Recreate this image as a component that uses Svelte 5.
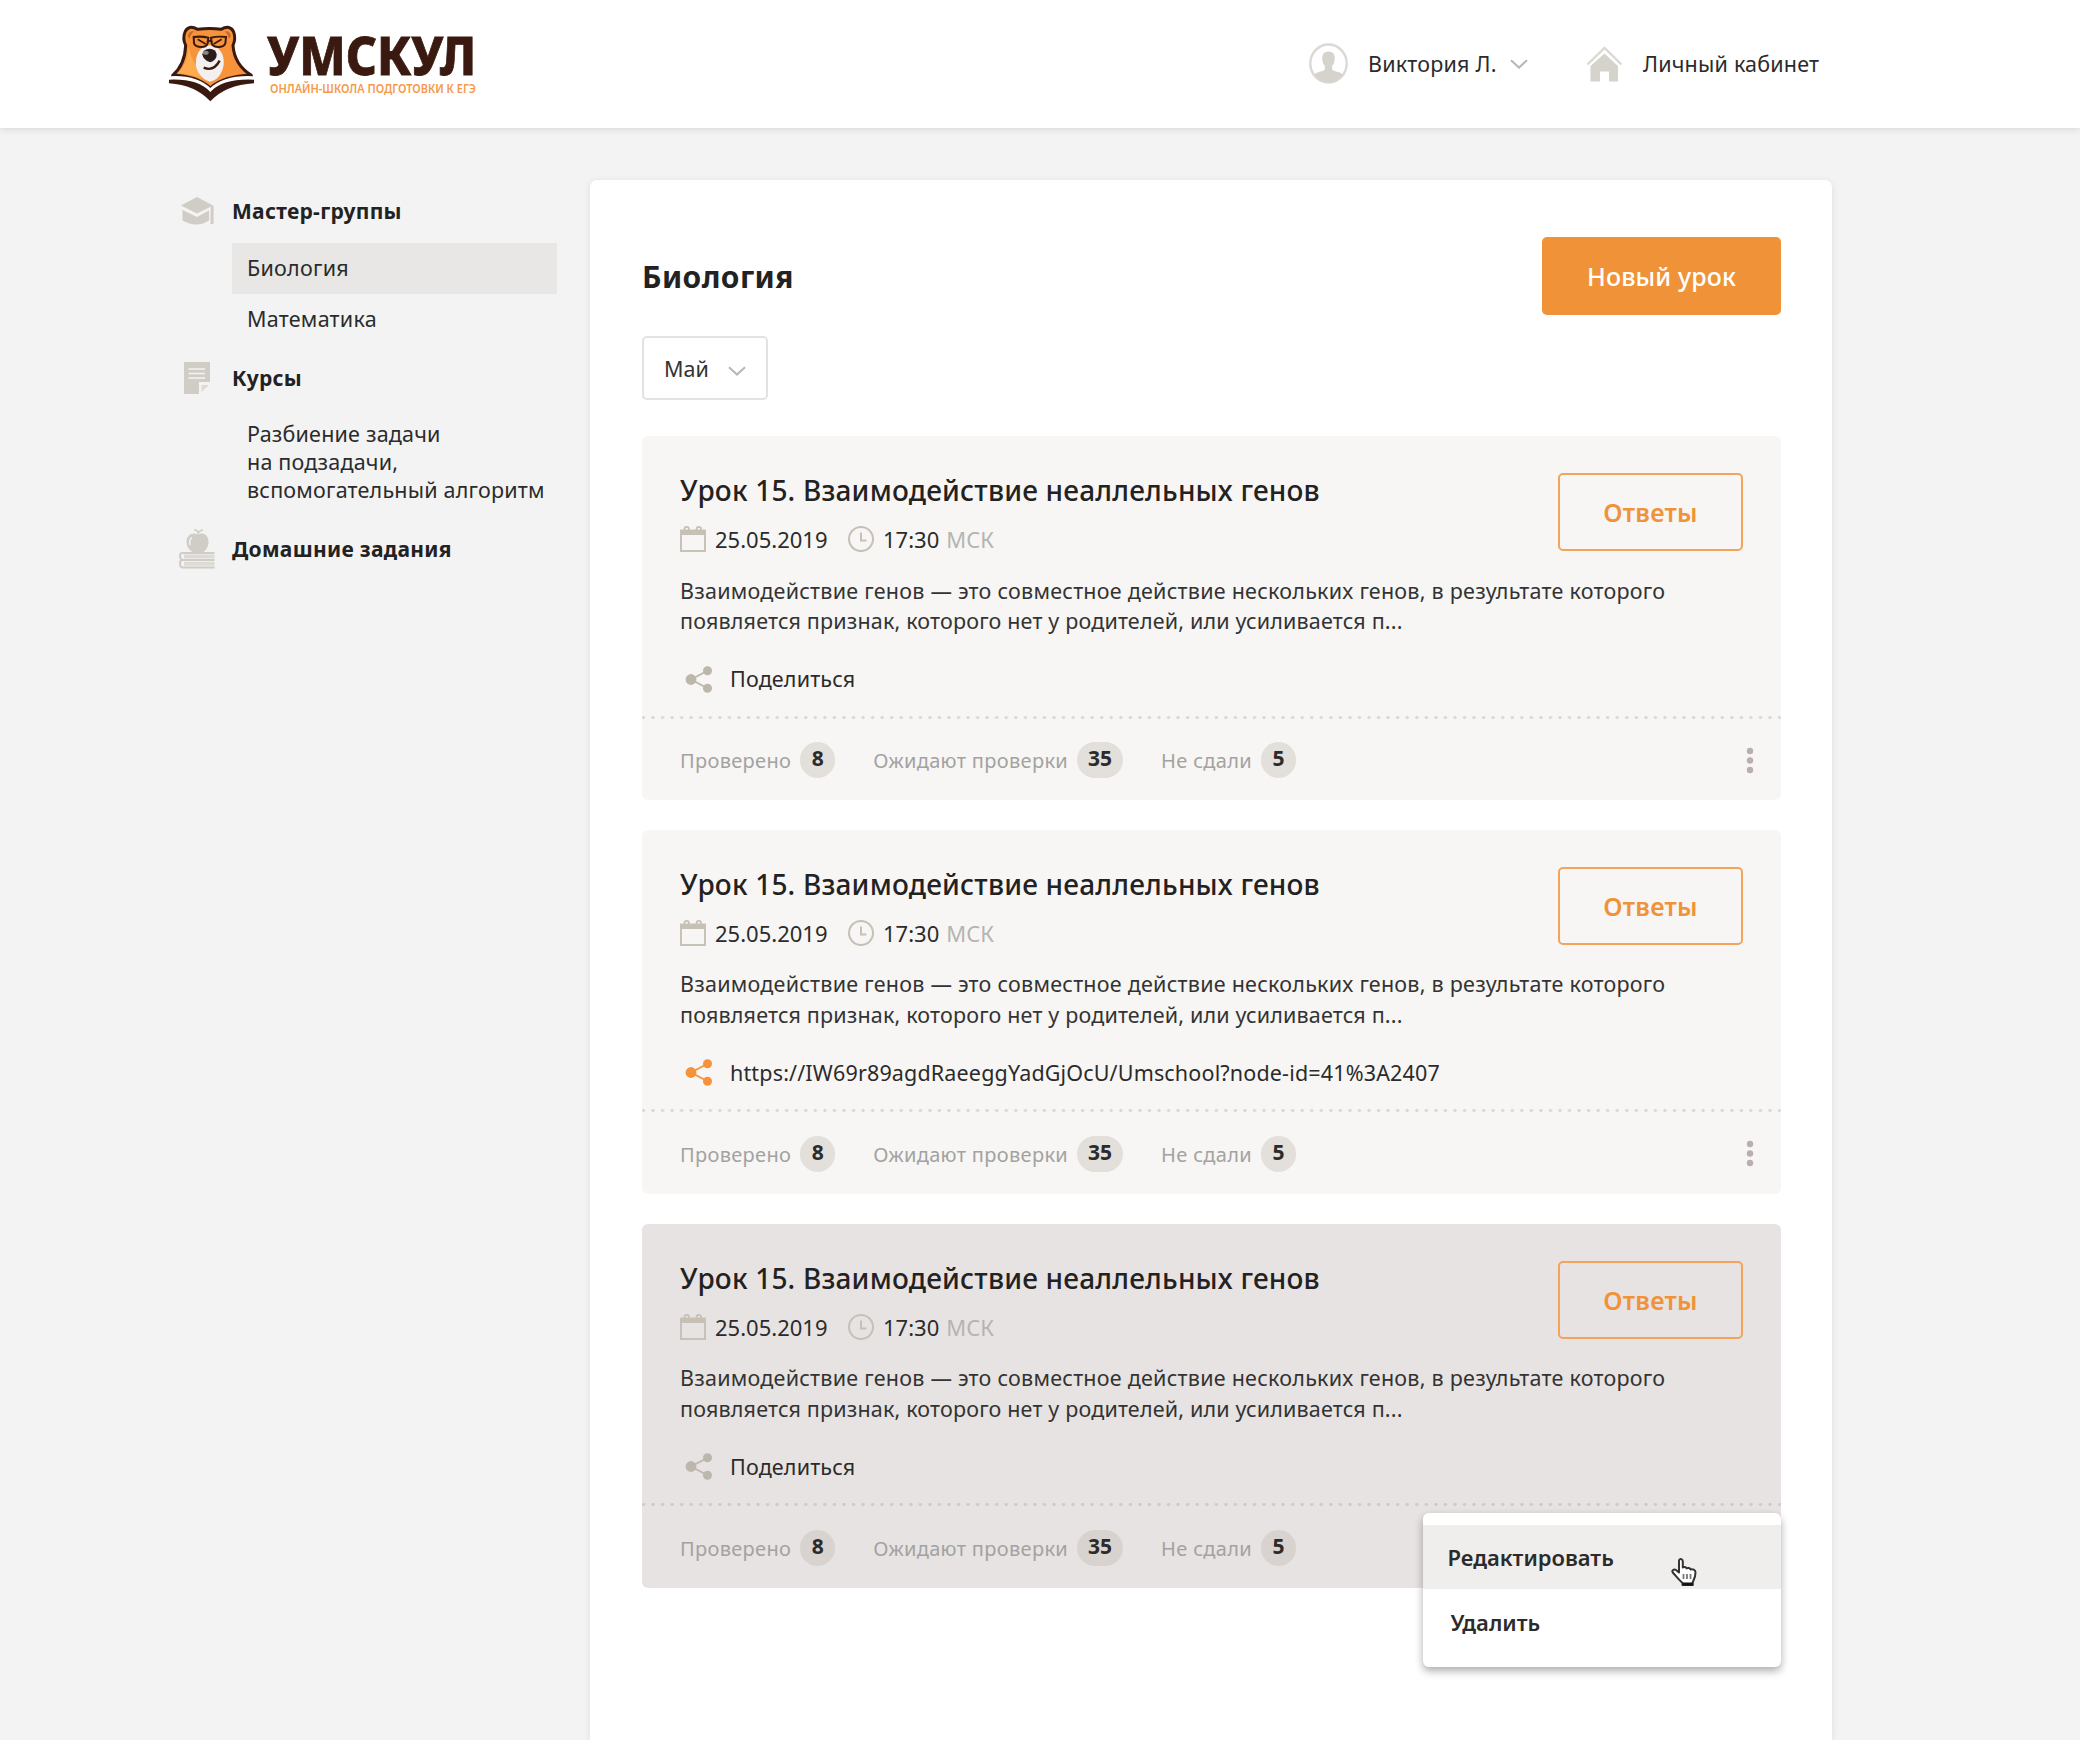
<script>
  const description = [
    'Взаимодействие генов — это совместное действие нескольких генов, в результате которого',
    'появляется признак, которого нет у родителей, или усиливается п...'
  ];
  const stats = [
    { label: 'Проверено', value: 8 },
    { label: 'Ожидают проверки', value: 35 },
    { label: 'Не сдали', value: 5 }
  ];
  const lessons = [
    { id: 1, share: 'Поделиться', shared: false, active: false },
    { id: 2, share: 'https://IW69r89agdRaeeggYadGjOcU/Umschool?node-id=41%3A2407', shared: true, active: false },
    { id: 3, share: 'Поделиться', shared: false, active: true }
  ];
</script>

{#snippet chevron()}
  <svg class="chevron" width="18" height="10" viewBox="0 0 18 10" fill="none"><path d="M1 1.2 9 8.6 17 1.2" stroke="#b9b7b4" stroke-width="2" /></svg>
{/snippet}

<header>
  <div class="logo">
    <svg width="87" height="79" viewBox="23 24 261 237">
      <path d="M37 178 Q74 146 76 88 Q66 68 74 48 Q84 25 112 40 Q150 35 182 40 Q210 25 220 48 Q227 68 218 88 Q222 146 273 178 Q190 180 150 216 Q110 180 37 178Z" fill="#f7933a" stroke="#3a1a10" stroke-width="9" stroke-linejoin="round" />
      <path d="M82 60 Q86 44 102 46 Q90 54 88 68Z M212 60 Q208 44 194 46 Q204 54 206 68Z" fill="#c86a22" />
      <path d="M52 172 Q84 142 84 92 Q94 130 108 150 Q110 172 124 188 Q96 174 52 172Z" fill="#ffac4e" />
      <path d="M148 88 C116 90 104 122 107 150 C111 176 132 194 149 197 C168 194 186 174 190 146 C193 116 178 90 148 88Z" fill="#f3f0ef" />
      <path d="M100 63 Q124 60 144 65 L142 82 Q138 93 124 93 Q104 93 101 82Z M152 65 Q172 60 197 63 L195 82 Q192 93 174 93 Q158 93 154 82Z" fill="#f7933a" stroke="#3a1a10" stroke-width="6" />
      <path d="M112 70 136 84 M184 70 160 84 M140 78 Q148 71 156 78" fill="none" stroke="#3a1a10" stroke-width="5" />
      <path d="M126 115 Q130 99 148 98 Q166 99 169 115 Q170 132 150 139 Q128 132 126 115Z" fill="#2b1d1b" />
      <ellipse cx="136" cy="110" rx="9" ry="6" fill="#8b8584" />
      <path d="M130 155 Q160 168 178 134" fill="none" stroke="#3a1a10" stroke-width="7" />
      <path d="M26 186 Q112 184 150 226 Q188 184 281 186 V200 Q196 204 150 250 Q104 204 26 200Z" fill="#fff" />
      <path d="M26 191 Q112 187 150 228 Q188 187 281 191 V202 Q196 207 150 256 Q104 207 26 202Z" fill="#3a1a10" />
      <path d="M34 184 Q110 181 150 221 Q190 181 275 184" fill="none" stroke="#fff" stroke-width="7" />
    </svg>
    <svg class="wordmark" width="212" height="66" viewBox="0 0 212 66">
      <text class="brand" x="0" y="43.500" textLength="209" lengthAdjust="spacingAndGlyphs">УМСКУЛ</text>
      <text class="tagline" x="3" y="61.500" textLength="206" lengthAdjust="spacingAndGlyphs">ОНЛАЙН-ШКОЛА ПОДГОТОВКИ К ЕГЭ</text>
    </svg>
  </div>
  <div class="account">
    <svg width="39" height="41" viewBox="0 0 39 41">
      <ellipse cx="19.5" cy="20.5" rx="18.2" ry="19" fill="#fff" stroke="#dcd8d3" stroke-width="2.4" />
      <path d="M19.5 8.5c4.200 0 6.500 2.800 6.300 7-.1 3.200-1 5.600-2.600 7.300v3.600c1.200 2 8.500 2.200 10.500 5.100C30.400 36.500 25.300 39.500 19.500 39.500S8.600 36.500 5.300 31.500c2-2.900 9.300-3.100 10.500-5.100v-3.600c-1.600-1.700-2.500-4.100-2.600-7.300-.2-4.200 2.100-7 6.300-7Z" fill="#d6d2cc" />
    </svg>
    <span class="name">Виктория Л.</span>
    {@render chevron()}
    <svg class="house" width="37" height="36" viewBox="0 0 37 36">
      <path d="M1.500 18.500 18.500 2 35.500 18.500" fill="none" stroke="#dcd8d3" stroke-width="2.400" />
      <path d="M4.500 20 18.500 7.500 32 20V35.500H23V25.500H14V35.500H4.500Z" fill="#d6d2cc" />
    </svg>
    <span class="cabinet">Личный кабинет</span>
  </div>
</header>

<main>
  <nav>
    <section>
      <h3>
        <svg width="36" height="30" viewBox="0 0 36 30" fill="#d0ccc6">
          <path d="M2 9.500 18 1 34 9.500 18 17.500Z" />
          <path d="M3.500 14 18 21 30 14.500V24.500Q18 32.500 3.500 24.500Z" />
          <path d="M32 10H34.500V28H31.500V20Z" />
        </svg>
        Мастер-группы
      </h3>
      <ul>
        <li class="current">Биология</li>
        <li>Математика</li>
      </ul>
    </section>
    <section>
      <h3>
        <svg width="36" height="34" viewBox="0 0 36 34">
          <path d="M5 1H31V21H20V33H5Z" fill="#d0ccc6" />
          <path d="M9.500 8H26M9.500 12.500H26M9.500 17H26" stroke="#f3f3f3" stroke-width="1.500" />
          <path d="M22.500 31V24H30Z" fill="#dedbd6" />
        </svg>
        Курсы
      </h3>
      <p>Разбиение задачи<br />на подзадачи,<br />вспомогательный алгоритм</p>
    </section>
    <section>
      <h3>
        <svg width="36" height="40" viewBox="0 0 36 40">
          <path d="M19 5.500C24 2.500 29.500 6 29.500 12.500 29.500 18.500 26 23 22.500 23.500H15.500C11 22.500 7.500 18 7.500 12.500 7.500 6 13.500 2.500 19 5.500Z" fill="#d0ccc6" />
          <path d="M11 16Q9.800 11 13 8.500" fill="none" stroke="#f3f3f3" stroke-width="1.500" />
          <path d="M15 1Q19 .5 19 4.500Q20 1.500 24 1" fill="none" stroke="#d0ccc6" stroke-width="1.500" />
          <path d="M35.500 24H3.500Q1 24 1 27T3.500 31H35.500M35.500 31H3.500Q1 31 1 34.500T3.500 38.500H35.500" fill="none" stroke="#d0ccc6" stroke-width="2" />
          <path d="M5 27.500H35.500M5 34.700H35.500" stroke="#dedbd6" stroke-width="4" />
        </svg>
        Домашние задания
      </h3>
    </section>
  </nav>

  <article class="panel">
    <div class="panel-head">
      <h1>Биология</h1>
      <button class="create">Новый урок</button>
    </div>
    <button class="month">Май {@render chevron()}</button>

    <div class="lessons">
      {#each lessons as lesson (lesson.id)}
        <section class="card" class:active={lesson.active}>
          <div class="content">
            <div class="info">
              <h2>Урок 15. Взаимодействие неаллельных генов</h2>
              <div class="meta">
                <svg width="26" height="26" viewBox="0 0 26 26" fill="none" stroke="#c6c0b5">
                  <rect x="1" y="4.500" width="24" height="20.500" stroke-width="1.900" />
                  <path d="M1 6.500H25" stroke-width="5" />
                  <path d="M4.500 6V3a2.200 2.200 0 0 1 4.400 0V6M16.600 6V3a2.200 2.200 0 0 1 4.400 0V6" stroke-width="1.800" />
                </svg>
                <span class="date">25.05.2019</span>
                <svg width="26" height="26" viewBox="0 0 26 26" fill="none" stroke="#c6c0b5">
                  <circle cx="13" cy="13" r="12" stroke-width="2" />
                  <path d="M13 6.500V14.500H18.500" stroke-width="2" />
                </svg>
                <span class="time">17:30</span>
                <span class="zone">МСК</span>
              </div>
            </div>
            <button class="answers">Ответы</button>
          </div>
          <p class="description">{description[0]}<br /><span>{description[1]}</span></p>
          <div class="share" class:shared={lesson.shared}>
            <svg width="28" height="27" viewBox="0 0 28 27" fill="currentColor" stroke="currentColor">
              <path d="M6 13.500 22.500 4.800M6 13.500 22.500 22.200" stroke-width="1.800" />
              <circle cx="6" cy="13.500" r="5.400" stroke="none" />
              <circle cx="22.500" cy="4.800" r="4.500" stroke="none" />
              <circle cx="22.500" cy="22.200" r="4.500" stroke="none" />
            </svg>
            <span>{lesson.share}</span>
          </div>
          <div class="divider"></div>
          <footer>
            {#each stats as stat (stat.label)}
              <span class="stat">{stat.label}<b>{stat.value}</b></span>
            {/each}
            <svg class="more" width="8" height="28" viewBox="0 0 8 28" fill="#b9b0ae">
              <circle cx="4" cy="4" r="3.200" /><circle cx="4" cy="13.500" r="3.200" /><circle cx="4" cy="23" r="3.200" />
            </svg>
          </footer>

          {#if lesson.active}
            <div class="menu">
              <div class="item hovered">
                Редактировать
                <svg width="28" height="30" viewBox="0 0 28 30">
                  <path d="M9.500 2.500C11 1.500 12.800 2.300 12.800 4.500V10.500C14 9.500 16 9.800 16.600 11.300 18 10.500 20 11 20.500 12.500 22.500 11.800 25.500 12.800 25.500 15.500 25.500 20 24.500 21.500 22.800 25V28H12.500V26C9 23 6 19 2.800 15.500 1.500 13.500 4 11.500 6 13L9 15.500V4.500Q8.800 3 9.500 2.500Z" fill="#fff" stroke="#333" stroke-width="2" stroke-linejoin="round" />
                  <path d="M13.500 17V22M17 17V22M20.500 17V22" stroke="#777" stroke-width="1.800" />
                  <path d="M12.500 27H22.800" stroke="#111" stroke-width="3" />
                </svg>
              </div>
              <div class="item second">Удалить</div>
            </div>
          {/if}
        </section>
      {/each}
    </div>
  </article>
</main>

<style>
  :global(body) {
    background: #f3f3f3;
    font-family: 'Noto Sans', 'Open Sans', sans-serif;
    color: #2b2b2b;
  }
  :global(#app) {
    height: 1740px;
    overflow: hidden;
    display: flex;
    flex-direction: column;
  }
  h1, h2, h3, p, ul { margin: 0; padding: 0; }
  ul { list-style: none; }
  svg { display: block; flex: none; overflow: visible; }
  button { font-family: inherit; padding: 0; cursor: pointer; white-space: nowrap; }

  header {
    display: flex;
    justify-content: space-between;
    align-items: center;
    box-sizing: border-box;
    flex: none;
    height: 128px;
    padding: 0 256px 1px 168px;
    background: #fff;
    box-shadow: 0 1px 7px rgba(0, 0, 0, 0.13);
  }
  .logo { display: flex; align-items: center; }
  .wordmark { margin-left: 12px; }
  .brand { font-weight: 800; font-size: 54px; fill: #3a1a10; stroke: #3a1a10; stroke-width: 0.800px; }
  .tagline { font-weight: 600; font-size: 12.500px; fill: #f59a4a; }
  .account { display: flex; align-items: center; font-size: 21.500px; letter-spacing: 0.2px; width: 515px; white-space: nowrap; }
  .name { margin: 0 11px 0 20px; width: 131px; }
  .house { margin: 0 20px 0 58px; }

  main { display: flex; flex: 1; padding: 52px 0 0 179px; }
  nav { width: 378px; padding-top: 16px; margin-right: 33px; flex: none; }
  h3 {
    display: flex;
    align-items: center;
    gap: 17px;
    height: 30px;
    font-size: 21px;
    line-height: 30px;
    letter-spacing: 0.3px;
    font-weight: 700;
    color: #222;
  }
  ul { margin: 17px 0 17.800px 53px; }
  li { box-sizing: border-box; height: 51px; padding: 0 0 2px 15px; line-height: 49px; font-size: 21.500px; letter-spacing: 0.25px; }
  .current { background: #e8e7e5; }
  nav p { margin: 27px 0 29.100px 68px; font-size: 21.500px; line-height: 28.200px; letter-spacing: 0.2px; white-space: nowrap; }

  .panel {
    box-sizing: border-box;
    width: 1242px;
    padding: 56.500px 51px 0 52px;
    background: #fff;
    border-radius: 7px 7px 0 0;
    box-shadow: 0 1px 7px rgba(0, 0, 0, 0.09);
  }
  .panel-head { display: flex; justify-content: space-between; }
  h1 { font-size: 30px; line-height: 80px; height: 78px; font-weight: 700; letter-spacing: 0.45px; color: #222; }
  .create { width: 239px; height: 78px; border: 0; border-radius: 5px; background: #f09338; color: #fff; font-size: 25px; font-weight: 500; letter-spacing: 0.1px; }
  .month {
    display: flex;
    align-items: center;
    justify-content: space-between;
    box-sizing: border-box;
    width: 126px;
    height: 64px;
    margin-top: 21.500px;
    padding: 0 20px;
    border: 2px solid #e3e2e1;
    border-radius: 5px;
    background: #fff;
    color: #333;
    font-size: 21.500px;
  }
  .month :global(.chevron) { margin-top: 6px; }

  .lessons { display: flex; flex-direction: column; gap: 29.800px; margin-top: 36px; }
  .card { position: relative; box-sizing: border-box; width: 1138.500px; height: 364px; border-radius: 6px; background: #f7f6f4; }
  .active { background: #e7e3e2; }
  .content { display: flex; justify-content: space-between; height: 116px; padding: 0 37.500px 0 38px; }
  .info { padding-top: 37px; }
  h2 { font-size: 28px; line-height: 34px; font-weight: 500; letter-spacing: 0.2px; color: #222; white-space: nowrap; }
  .meta { display: flex; align-items: center; height: 26px; margin-top: 19.400px; font-size: 22px; line-height: 26px; }
  .date { margin: 0 19px 0 9px; width: 114px; }
  .time { margin: 0 7px 0 9px; }
  .zone { color: #b5b4b2; }
  .answers { box-sizing: border-box; width: 185px; height: 78px; margin-top: 37.300px; border: 2px solid #f3a45a; border-radius: 5px; background: none; color: #f09338; font-size: 25px; font-weight: 600; letter-spacing: 0.3px; }
  .description { margin: 23.600px 0 0 38px; font-size: 21.500px; line-height: 30.600px; letter-spacing: 0.24px; color: #333; white-space: nowrap; }
  .description span { letter-spacing: 0.17px; }
  .share { display: flex; align-items: center; gap: 17px; height: 26px; margin: 29.300px 0 0 43px; font-size: 21.500px; line-height: 26px; letter-spacing: 0.16px; color: #bdb6ab; }
  .share span { color: #2b2b2b; }
  .shared { color: #f6923a; }
  .divider { height: 3px; margin-top: 23.500px; background: radial-gradient(circle, #dad7d4 1.300px, transparent 1.900px) 0 0 / 9.560px 3px repeat-x; background-position-x: -3.300px; }
  .active .divider { background-image: radial-gradient(circle, #cfcac8 1.300px, transparent 1.900px); }
  footer { display: flex; align-items: center; height: 36px; margin: 24px 27px 0 38px; }
  .stat { display: flex; margin-right: 38px; font-size: 20px; line-height: 37px; letter-spacing: 0.32px; color: #a3a2a0; white-space: nowrap; }
  .stat b { box-sizing: border-box; min-width: 35px; height: 36px; margin-left: 9px; padding: 0 11px 4px; border-radius: 18px; background: rgba(190, 183, 175, 0.36); color: #2b2b2b; font-size: 21px; line-height: 33px; letter-spacing: 0; text-align: center; }
  .more { margin-left: auto; }

  .menu {
    position: absolute;
    top: 289.400px;
    right: 0;
    box-sizing: border-box;
    width: 358px;
    height: 154px;
    padding-top: 12.500px;
    border-radius: 6px;
    background: #fff;
    box-shadow: 0 4px 9px rgba(0, 0, 0, 0.33);
  }
  .item { display: flex; box-sizing: border-box; height: 63.500px; padding: 1px 0 0 25px; font-size: 22px; line-height: 62px; font-weight: 600; letter-spacing: 0; color: #2b2b2b; }
  .item svg { margin: 31px 0 0 56px; }
  .hovered { background: #efeeec; }
  .second { padding: 2px 0 0 28px; }
</style>
